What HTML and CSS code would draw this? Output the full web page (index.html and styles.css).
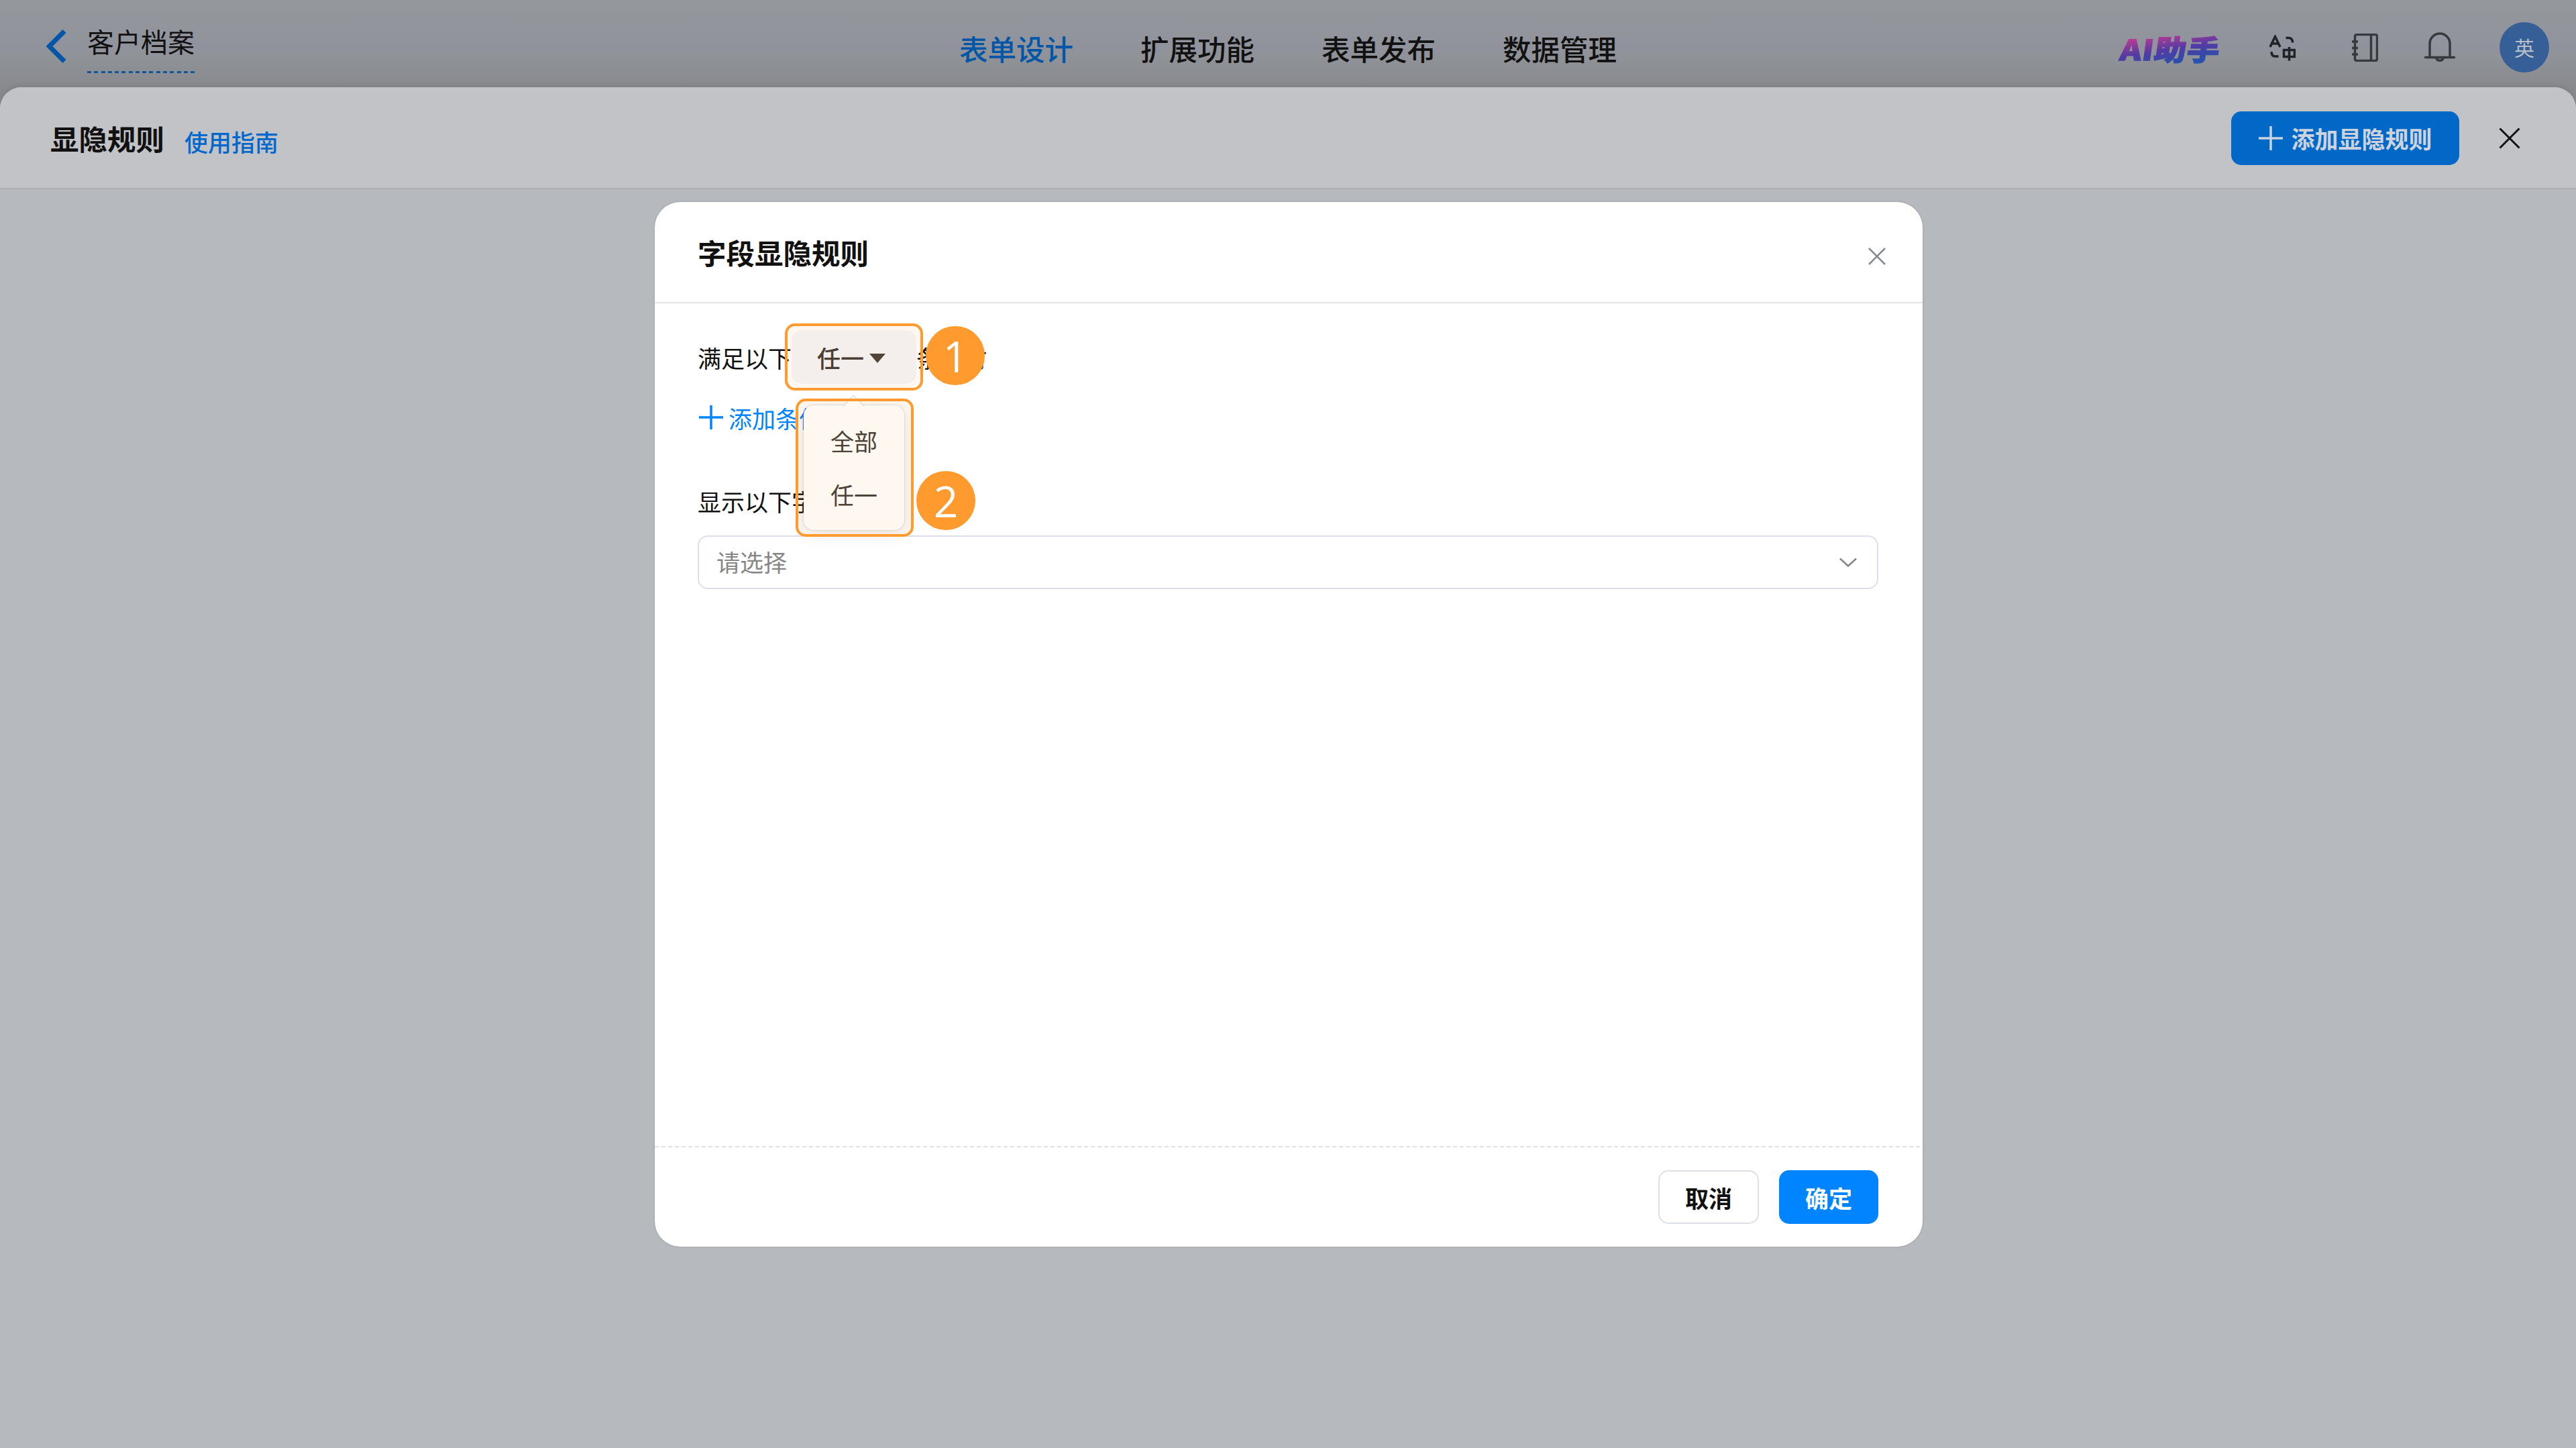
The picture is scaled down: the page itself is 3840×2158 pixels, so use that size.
FILE: index.html
```html
<!DOCTYPE html>
<html lang="zh-CN">
<head>
  <meta charset="UTF-8">
  <meta name="viewport" content="width=device-width, initial-scale=1">
  <title>客户档案</title>
  <link rel="stylesheet" href="styles.css">
</head>

<body>

  <!-- Top bar -->
  <header class="topbar">
    <div class="topbar__left">
      <svg class="icon-back" viewBox="0 0 30 50"><path d="M27 2.500 4.500 25 27 47.500"/></svg>
      <span class="form-name">客户档案</span>
    </div>
    <nav class="nav">
      <a class="nav__item active">表单设计</a>
      <a class="nav__item">扩展功能</a>
      <a class="nav__item">表单发布</a>
      <a class="nav__item">数据管理</a>
    </nav>
    <div class="topbar__right">
      <span class="ai-logo">AI助手</span>
      <svg class="icon-lang" viewBox="0 0 40 40">
        <path d="M2 18 9.500 2.500 17 18M4.500 13h10"/>
        <path d="M25.500 4.500h4q6 0 6 7"/>
        <path d="M4 25q0 7 6 7h4.500"/>
        <path d="M22.500 22.500h16v10h-16zM30.500 18v20.500"/>
      </svg>
      <svg class="icon-book" viewBox="0 0 40 42">
        <rect x="5.500" y="1.500" width="33" height="39" rx="2.500"/>
        <path d="M29.500 1.500v39M1 12h9M1 21.500h9M1 31h9"/>
      </svg>
      <svg class="icon-bell" viewBox="0 0 46 46">
        <path d="M8 37.500V17a15 15 0 0 1 30 0v20.500M1.500 37.500h43M17.500 38a5.700 5.700 0 0 0 11 0"/>
      </svg>
      <span class="avatar">英</span>
    </div>
  </header>

  <!-- Rules sheet -->
  <main class="sheet">
    <div class="sheet__head">
      <h1>显隐规则</h1>
      <a class="guide">使用指南</a>
      <button class="btn btn--add">
        <svg class="icon-plus" viewBox="0 0 36 36"><path d="M18 0v36M0 18h36"/></svg>
        添加显隐规则
      </button>
      <svg class="icon-close" viewBox="0 0 32 32"><path d="M1.500 1.500l29 29M30.500 1.500l-29 29"/></svg>
    </div>
  </main>

  <!-- Dialog -->
  <div class="mask">
    <section class="modal">
      <div class="modal__head">
        <h2>字段显隐规则</h2>
        <svg class="modal__close" viewBox="0 0 26 26"><path d="M1 1l24 24M25 1 1 25"/></svg>
      </div>

      <div class="modal__body">
        <div class="cond">
          <span class="cond__label">满足以下</span>
          <div class="trigger">
            任一
            <svg class="icon-caret" viewBox="0 0 24 14"><path d="M0 0h24L12 14z"/></svg>
            <div class="popup">
              <div class="popup__item">全部</div>
              <div class="popup__item">任一</div>
            </div>
          </div>
          <span>条件时</span>
        </div>
        <a class="add-cond">
          <svg class="icon-plus" viewBox="0 0 36 36"><path d="M18 0v36M0 18h36"/></svg>
          添加条件
        </a>
        <div class="field-label">显示以下字段</div>
        <div class="select">
          <span>请选择</span>
          <svg class="icon-down" viewBox="0 0 26 15"><path d="M1 1.500l12 11 12-11"/></svg>
        </div>

        <!-- step callouts over the form -->
        <div class="mark mark--one"></div>
        <div class="step step--one">1</div>
        <div class="mark mark--two"></div>
        <div class="step step--two">2</div>
      </div>

      <div class="modal__foot">
        <button class="btn btn--plain">取消</button>
        <button class="btn btn--primary">确定</button>
      </div>
    </section>
  </div>

</body>
</html>
```
FILE: styles.css
```css
*, *::before, *::after {
  margin: 0;
  padding: 0;
  box-sizing: border-box;
}
body {
  position: relative;
  height: 2158px;
  overflow: hidden;
  font-family: "Noto Sans CJK SC", sans-serif;
  font-size: 35px;
  color: #111;
  background: #8b8d91;
}
svg {
  display: block;
  flex: none;
  fill: none;
  stroke: currentColor;
}

/* ===== Top bar ===== */
.topbar {
  display: flex;
  height: 162px;
  padding: 0 40px 32px 69px;
  background: linear-gradient(#94989b 0, #90939c 70px, #8f9296 85px, #888a8e 129px);
}
.topbar__left {
  display: flex;
  width: 1361px;
}
.icon-back {
  width: 30px;
  height: 50px;
  margin: 44px 31px 0 0;
  color: #0256a8;
  stroke-width: 7;
}
.form-name {
  align-self: flex-start;
  height: 109px;
  padding-top: 31px;
  font-size: 40px;
  line-height: 60px;
  background: repeating-linear-gradient(90deg, #0e559c 0 6px, transparent 6px 10.270px) left bottom / 160px 3px no-repeat;
}
.nav {
  display: flex;
  gap: 100px;
  padding-top: 42px;
  font-size: 42.500px;
  font-weight: 500;
  line-height: 60px;
}
.nav__item.active {
  color: #0256a8;
}
.topbar__right {
  display: flex;
  align-items: flex-start;
  margin-left: auto;
  color: #36393e;
}
.ai-logo {
  margin: 45px 69px 0 0;
  width: 154px;
  padding-left: 2px;
  font-size: 42px;
  font-weight: 900;
  line-height: 54px;
  letter-spacing: 1px;
  white-space: nowrap;
  transform: skewX(-8deg) scaleX(1.140);
  transform-origin: left center;
  color: transparent;
  -webkit-text-stroke: 1.500px transparent;
  background: linear-gradient(170deg, #b83b94 20%, #533aa4 50%, #2452ac 80%);
  -webkit-background-clip: text;
  background-clip: text;
}
.icon-lang {
  width: 40px;
  height: 40px;
  margin: 52px 83px 0 0;
  color: #1f2226;
  stroke-width: 3.500;
}
.icon-book {
  width: 40px;
  height: 42px;
  margin: 50px 69px 0 0;
  stroke-width: 3.500;
}
.icon-bell {
  width: 46px;
  height: 46px;
  margin: 48px 66px 0 0;
  stroke-width: 3.500;
  stroke-linecap: round;
}
.avatar {
  width: 74px;
  height: 75px;
  margin-top: 33px;
  border-radius: 50%;
  font-size: 30px;
  line-height: 75px;
  text-align: center;
  color: #b9bfc9;
  background: #365f98;
}

/* ===== Sheet ===== */
.sheet {
  height: 2028px;
  margin-top: -32px;
  border-radius: 32px 32px 0 0;
  background: #b6b9be;
  box-shadow: 0 0 10px rgba(0, 0, 0, 0.120);
  overflow: hidden;
}
.sheet__head {
  display: flex;
  align-items: center;
  height: 152px;
  padding: 1px 83px 0 75px;
  background: #c2c3c7;
  border-bottom: 2px solid #adafb3;
}
.sheet__head h1 {
  font-size: 42.500px;
  font-weight: 700;
  line-height: 60px;
}
.guide {
  margin: 9px auto 0 30px;
  font-weight: 500;
  color: #0268cc;
}
.btn {
  display: flex;
  align-items: center;
  justify-content: center;
  height: 80px;
  border: none;
  border-radius: 15px;
  font-family: inherit;
  font-size: 35px;
  font-weight: 700;
}
.btn--add {
  gap: 12px;
  width: 340px;
  padding-left: 1px;
  color: #cdd3dc;
  background: #0268c8;
}
.icon-plus {
  width: 36px;
  height: 36px;
  stroke-width: 3.500;
}
.icon-close {
  width: 32px;
  height: 32px;
  margin-left: 59px;
  stroke-width: 3;
}

/* ===== Dialog ===== */
.mask {
  position: absolute;
  inset: 0;
  padding: 301px 0 0 976px;
}
.modal {
  display: flex;
  flex-direction: column;
  width: 1890px;
  height: 1557px;
  border-radius: 38px;
  background: #fff;
  box-shadow: 0 0 3px rgba(0, 0, 0, 0.200);
}
.modal__head {
  display: flex;
  align-items: center;
  justify-content: space-between;
  height: 151px;
  padding: 0 55px 0 64px;
  border-bottom: 2px solid #e5e6e8;
}
.modal__head h2 {
  font-size: 42.500px;
  font-weight: 700;
  line-height: 60px;
}
.modal__close {
  width: 26px;
  height: 26px;
  margin-top: 12px;
  color: #85888e;
  stroke-width: 2.500;
}
.modal__body {
  position: relative;
  flex: 1;
  padding: 40px 66px 0 64px;
}
.cond {
  display: flex;
  align-items: center;
  height: 80px;
}
.trigger {
  position: relative;
  display: flex;
  align-items: center;
  gap: 8px;
  width: 186px;
  height: 80px;
  padding-left: 38px;
  border-radius: 15px;
  font-weight: 500;
  color: #3d3935;
  background: #f4f6fa;
}
.icon-caret {
  width: 24px;
  height: 14px;
  margin-top: 3px;
  fill: #45403b;
  stroke: none;
}
.popup {
  position: absolute;
  top: 112px;
  left: 18px;
  width: 150px;
  height: 186px;
  padding-top: 13px;
  border-radius: 15px;
  font-weight: 400;
  text-align: center;
  color: #403c38;
  background: #fff;
  box-shadow: 0 0 3px rgba(40, 50, 80, 0.250), 0 6px 30px rgba(0, 0, 0, 0.090);
}
.popup::before {
  content: "";
  position: absolute;
  top: -11px;
  left: 63px;
  width: 23px;
  height: 23px;
  border: solid #e6e7ea;
  border-width: 2px 0 0 2px;
  background: #fff;
  transform: rotate(45deg);
}
.popup__item {
  position: relative;
  height: 80px;
  line-height: 80px;
}
.add-cond {
  display: flex;
  align-items: center;
  gap: 8px;
  height: 50px;
  margin-top: 25px;
  padding-left: 2px;
  color: #0084ff;
}
.field-label {
  height: 50px;
  margin-top: 75px;
  line-height: 50px;
}
.select {
  display: flex;
  align-items: center;
  justify-content: space-between;
  height: 80px;
  margin-top: 26px;
  padding: 0 30px 0 26px;
  border: 2px solid #dde0ea;
  border-radius: 15px;
  color: #868686;
}
.select span {
  margin-top: -3px;
}
.icon-down {
  width: 26px;
  height: 15px;
  stroke-width: 2.500;
}

/* callouts */
.mark {
  position: absolute;
  border: 4px solid #ff9a2e;
  border-radius: 15px;
  background: rgba(255, 154, 46, 0.065);
}
.mark--one {
  top: 30px;
  left: 194px;
  width: 206px;
  height: 100px;
}
.mark--two {
  top: 142px;
  left: 210px;
  width: 176px;
  height: 206px;
}
.step {
  position: absolute;
  width: 88px;
  height: 88px;
  border-radius: 50%;
  font-family: "Open Sans", "Noto Sans", sans-serif;
  font-size: 64px;
  line-height: 90px;
  text-align: center;
  color: #fff;
  background: #ff9a2e;
}
.step--one {
  top: 34px;
  left: 404px;
}
.step--two {
  top: 250px;
  left: 390px;
}
.modal__foot {
  display: flex;
  justify-content: flex-end;
  gap: 30px;
  height: 150px;
  padding: 36px 66px 0 0;
  background: repeating-linear-gradient(90deg, #dfe1e3 0 6px, transparent 6px 10px) left top / 100% 2px no-repeat;
}
.btn--plain {
  width: 150px;
  border: 2px solid #dde0e8;
  color: #111;
  background: #fff;
}
.btn--primary {
  width: 148px;
  color: #fff;
  background: #0084ff;
}
```
